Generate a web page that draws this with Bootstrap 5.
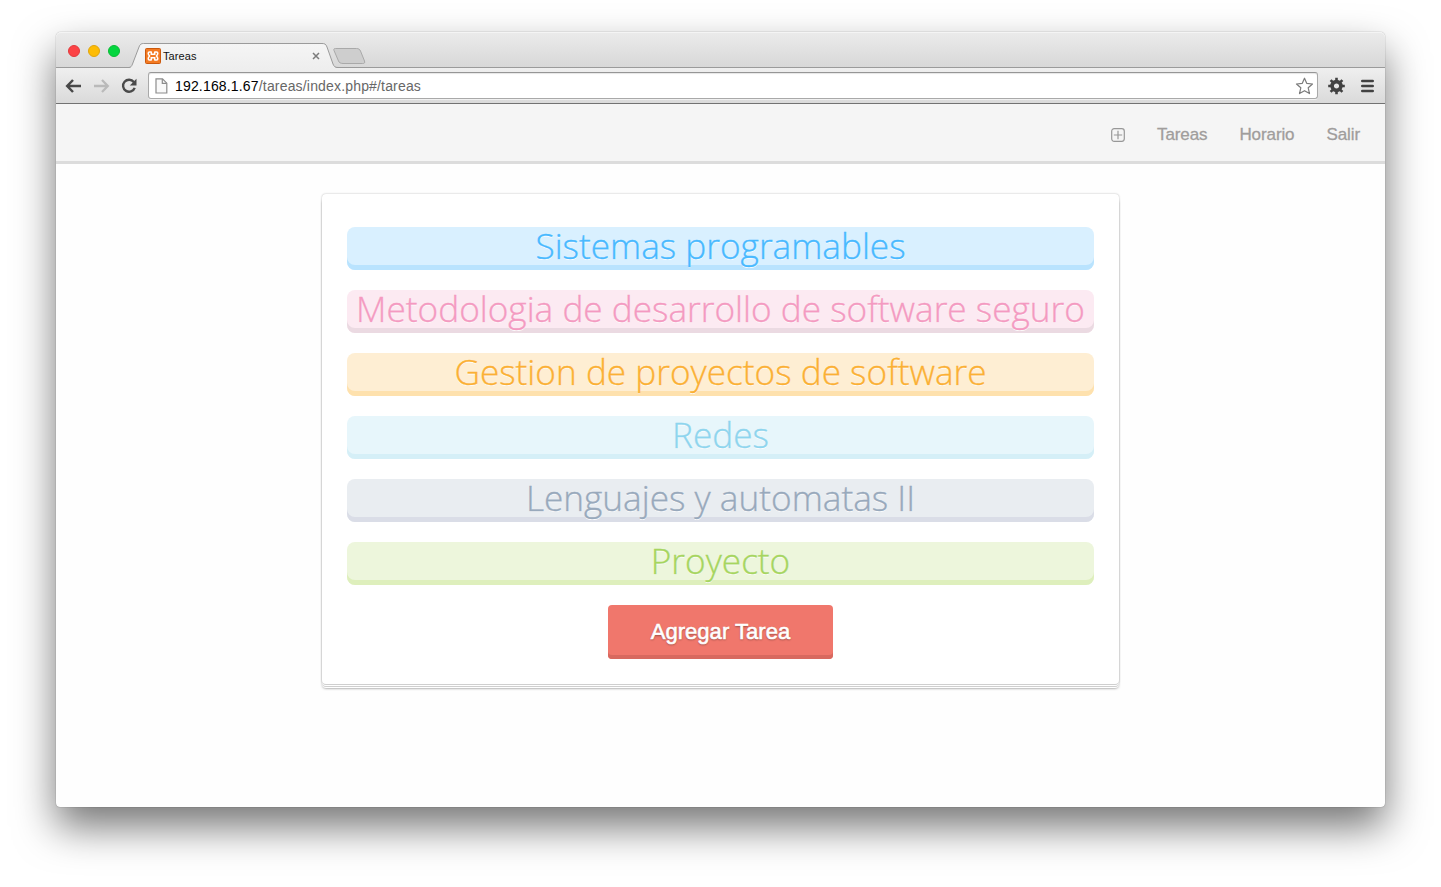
<!DOCTYPE html>
<html lang="es">
<head>
<meta charset="utf-8">
<meta name="viewport" content="width=device-width, initial-scale=1">
<title>Tareas</title>
<link rel="stylesheet" href="https://cdn.jsdelivr.net/npm/bootstrap@5.3.0/dist/css/bootstrap.min.css">
<style>
  body { background: #fff; font-family: "Liberation Sans", sans-serif; height: 887px; padding: 32px 56px 80px; overflow: hidden; }
  svg { display: block; flex: none; }
  .app-window { height: 775px; border-radius: 5px 5px 4px 4px; box-shadow: 0 0 1px rgba(0,0,0,.6), 0 20px 40px rgba(0,0,0,.54); background: #fefefe; }
  .tab-strip { height: 36px; padding-left: 12px; background: linear-gradient(#ebebeb, #d8d8d8); border-bottom: 1px solid #9b9b9b; border-radius: 5px 5px 0 0; box-shadow: inset 0 1px #f4f4f4; }
  .light { width: 12px; height: 12px; border-radius: 50%; margin-top: 13px; margin-right: 8px; border: 1px solid; }
  .light-red { background: #fc4346; border-color: #e23a3d; }
  .light-yellow { background: #fdbc05; border-color: #e0a50c; }
  .light-green { background: #04d63f; border-color: #0abb35; }
  .tab-box { width: 208px; height: 26px; margin: 10px 0 0 1px; }
  .tab-shape { left: 0; top: 0; }
  .tab-row { height: 28px; padding: 0 17px 0 16px; }
  .tab-title { font-size: 11px; color: #111; margin-left: 2px; letter-spacing: .1px; }
  .tool-bar { height: 36px; padding: 0 11px 0 9px; background: linear-gradient(#efefef, #dadada); border-bottom: 1px solid #727272; }
  .icon-forward { margin: 0 11px; }
  .icon-gear { margin: 0 15px 0 10px; }
  .url-box { height: 27px; border: 1px solid #a9a9a9; border-top-color: #969696; border-radius: 3px; background: #fff; margin-left: 11px; padding: 0 4px 0 6px; box-shadow: 0 1px rgba(255,255,255,.6), inset 0 1px 1px rgba(0,0,0,.1); }
  .url-text { font-size: 14px; color: #676767; margin-left: 7px; padding-top: 1px; letter-spacing: .17px; }
  .url-text b { font-weight: 400; color: #000; }
  .site-nav { height: 60px; background: #f5f5f5; border-bottom: 3px solid #dcdcdc; padding: 0 25px 0 0; gap: 32px; }
  .site-nav a { color: #a09d9c; font-size: 17px; line-height: 24px; text-decoration: none; letter-spacing: -.1px; -webkit-text-stroke: .3px #a09d9c; padding-top: 4px; }
  .task-panel { width: 797px; height: 490px; margin-top: 30px; padding: 33px 25px 0; border-radius: 4px; background: #fff;
    box-shadow: 0 1px #cfcfcf, 0 2px #fff, 0 3px #cfcfcf, 0 4px #fff, 0 5px 3px -1px rgba(0,0,0,.6), 0 0 2px rgba(0,0,0,.3); }
  .task-item { height: 43px; margin-bottom: 20px; border-radius: 8px; font: 300 35.2px/37.6px "Open Sans", sans-serif; text-align: center; white-space: nowrap; -webkit-text-stroke: .35px currentColor; text-shadow: 0 1px rgba(255,255,255,.85); }
  .task-blue { color: #48b9ff; background: #d9f0ff; box-shadow: inset 0 -5px #b9e3fe; }
  .task-pink { color: #f49ac1; background: #fceaf2; box-shadow: inset 0 -5px #ebdae2; }
  .task-orange { color: #fbb034; background: #feeed3; box-shadow: inset 0 -5px #fee1ad; }
  .task-sky { color: #8ed5ee; background: #e7f6fb; box-shadow: inset 0 -5px #d5eff7; }
  .task-slate { color: #98a9bc; background: #e9edf1; box-shadow: inset 0 -5px #dadde7; }
  .task-green { color: #a6d55f; background: #edf6dc; box-shadow: inset 0 -5px #deefbc; }
  .btn.add-task { width: 225px; height: 54px; padding: 0 0 1px; border: 0; border-radius: 4px; color: #fff; background: #f0776c; box-shadow: inset 0 -4px #d8695f; font-size: 22px; letter-spacing: .05px; -webkit-text-stroke: .6px #fff; text-shadow: 0 1px 2px rgba(0,0,0,.4); }
</style>
</head>
<body>
<div class="app-window">
  <div class="tab-strip d-flex">
    <span class="light light-red"></span><span class="light light-yellow"></span><span class="light light-green"></span>
    <div class="tab-box position-relative">
      <svg class="tab-shape position-absolute" width="240" height="27" viewBox="0 0 240 27">
        <defs><linearGradient id="tabFill" x2="0" y2="1"><stop stop-color="#f5f5f5"/><stop offset="1" stop-color="#eeeeee"/></linearGradient></defs>
        <path d="M0 26C2 25.500 2.500 24.500 3.500 22L10 5C11 2 12.500 1.500 14.500 1.500H193C195.500 1.500 197 2 198 5L204 22C205 24.500 206 25.500 209 26V27H0Z" fill="url(#tabFill)"/>
        <path d="M0 25.500C2 25 2.500 24.500 3.500 22L10 5C11 2 12.500 1.500 14.500 1.500H193C195.500 1.500 197 2 198 5L204 22C205 24.500 206 25.500 209 25.500" fill="none" stroke="#9b9b9b"/>
        <path d="M206.500 6.500H227.500C229.500 6.500 231 7.500 231.500 9L235.500 19C236 21 235.500 21.500 233.500 21.500H214C211.500 21.500 210 20.500 209.500 19L205 8.500C204.500 7 205 6.500 206.500 6.500Z" fill="#cecece" stroke="#a9a9a9"/>
      </svg>
      <div class="tab-row d-flex align-items-center position-relative">
        <svg width="16" height="16" viewBox="0 0 16 16"><rect x=".5" y=".5" width="15" height="15" rx="1" fill="#f37a22" stroke="#cb590d"/><path d="M6.300 4H4.500Q3.200 4 3.200 5.300Q3.200 6.500 4.500 8Q3.200 9.500 3.200 10.700Q3.200 12 4.500 12H6.300M9.700 4H11.500Q12.800 4 12.800 5.300Q12.800 6.500 11.500 8Q12.800 9.500 12.800 10.700Q12.800 12 11.500 12H9.700M6.300 3.500V6.200H9.700V3.500M6.300 12.500V9.800H9.700V12.500" fill="none" stroke="#fff" stroke-width="1.500"/></svg>
        <span class="tab-title flex-grow-1">Tareas</span>
        <svg width="8" height="8" viewBox="0 0 8 8"><path d="M1 1L7 7M7 1L1 7" stroke="#7b7b7b" stroke-width="1.500"/></svg>
      </div>
    </div>
  </div>

  <div class="tool-bar d-flex align-items-center">
    <svg width="17" height="16" viewBox="0 0 17 16"><path d="M8 2L2.200 8L8 14M2.500 8H16" fill="none" stroke="#484848" stroke-width="2.500"/></svg>
    <svg class="icon-forward" width="17" height="16" viewBox="0 0 17 16"><path d="M9 2L14.800 8L9 14M14.500 8H1" fill="none" stroke="#bababa" stroke-width="2.300"/></svg>
    <svg width="16" height="16" viewBox="0 0 16 16"><path d="M12.800 4A6 6 0 1 0 13.700 9.800" fill="none" stroke="#4a4a4a" stroke-width="2.400"/><path d="M15.500 .8V7.500H8.800Z" fill="#4a4a4a"/></svg>
    <div class="url-box d-flex align-items-center flex-grow-1">
      <svg width="13" height="16" viewBox="0 0 13 16"><path d="M1 .9H7.500L11.800 5.200V15H1Z" fill="#f9f9f9" stroke="#8c8c8c" stroke-width="1.200"/><path d="M7.300 1V5.400H11.800" fill="none" stroke="#8c8c8c" stroke-width="1.200"/></svg>
      <span class="url-text flex-grow-1"><b>192.168.1.67</b>/tareas/index.php#/tareas</span>
      <svg width="18" height="18" viewBox="0 0 18 18"><path d="M9.500 1.200L11.700 6.300L17.500 7L13.200 10.800L14.500 16.600L9.500 13.700L4.500 16.600L5.800 10.800L1.500 7L7.300 6.300Z" fill="#fff" stroke="#7b7b7b" stroke-width="1.200" stroke-linejoin="round"/></svg>
    </div>
    <svg class="icon-gear" width="18" height="18" viewBox="-8.500 -9 18 18"><circle r="4.400" fill="none" stroke="#424242" stroke-width="3.600"/><path d="M0-8.300V-5M0 8.300V5M-8.300 0H-5M8.300 0H5M-5.900-5.900L-3.800-3.800M5.900 5.900L3.800 3.800M-5.900 5.900L-3.800 3.800M5.900-5.900L3.800-3.800" stroke="#424242" stroke-width="2.600"/></svg>
    <svg width="13" height="14" viewBox="0 0 13 14"><path d="M1.300 2H11.700M1.300 7H11.700M1.300 12H11.700" stroke="#424242" stroke-width="2.600" stroke-linecap="round"/></svg>
  </div>

  <nav class="site-nav d-flex align-items-center justify-content-end">
    <a href="#" aria-label="Agregar"><svg width="14" height="14" viewBox="0 0 14 14"><rect x=".7" y=".7" width="12.600" height="12.600" rx="2.500" fill="none" stroke="#989898" stroke-width="1.200"/><path d="M7 2.800V11.200M2.800 7H11.200" stroke="#989898" stroke-width="1.200"/></svg></a>
    <a href="#">Tareas</a>
    <a href="#">Horario</a>
    <a href="#">Salir</a>
  </nav>

  <main class="task-panel mx-auto">
    <div class="task-item task-blue">Sistemas programables</div>
    <div class="task-item task-pink">Metodologia de desarrollo de software seguro</div>
    <div class="task-item task-orange">Gestion de proyectos de software</div>
    <div class="task-item task-sky">Redes</div>
    <div class="task-item task-slate">Lenguajes y automatas II</div>
    <div class="task-item task-green">Proyecto</div>
    <button type="button" class="btn add-task d-block mx-auto">Agregar Tarea</button>
  </main>
</div>
<script src="https://cdn.jsdelivr.net/npm/bootstrap@5.3.0/dist/js/bootstrap.bundle.min.js"></script>
</body>
</html>
